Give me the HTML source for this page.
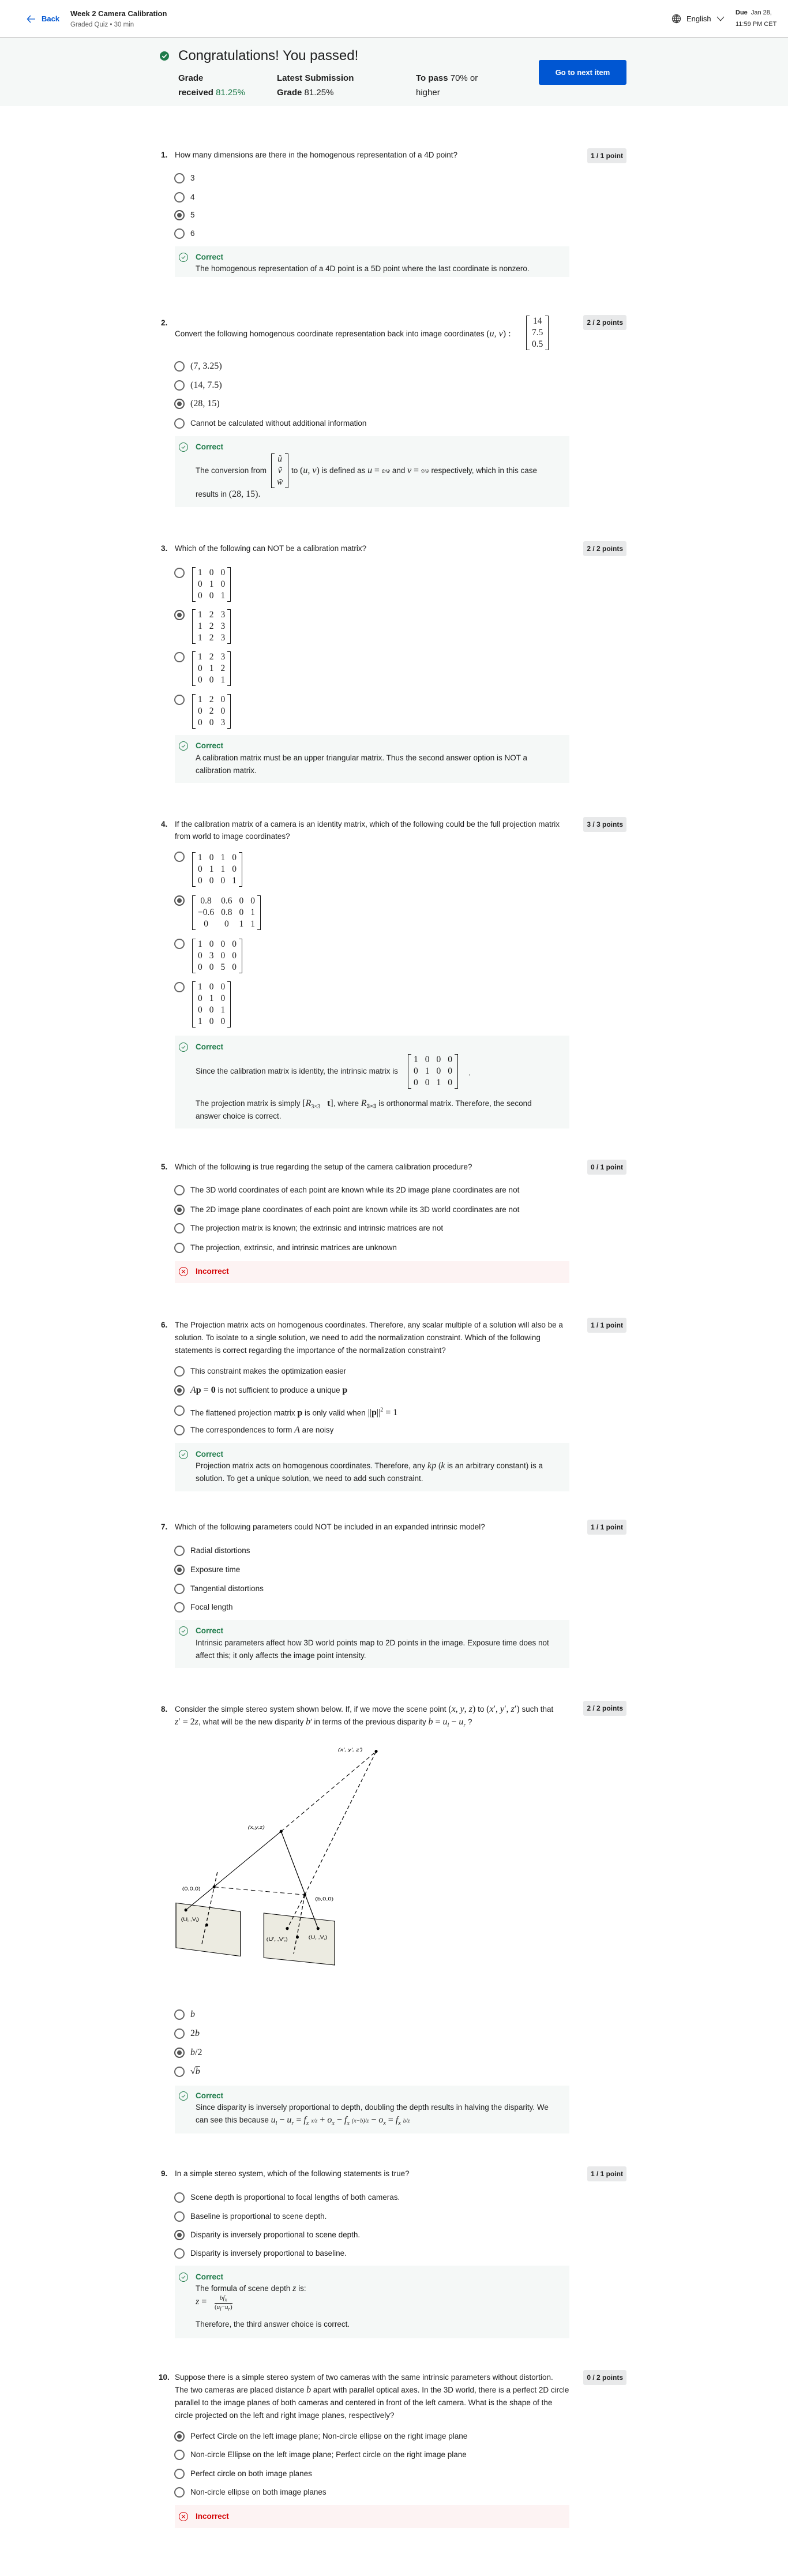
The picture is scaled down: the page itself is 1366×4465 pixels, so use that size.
<!DOCTYPE html>
<html><head><meta charset="utf-8">
<style>
*{margin:0;padding:0;box-sizing:border-box}
body{width:1366px;height:4465px;position:relative;background:#fff;font-family:"Liberation Sans",sans-serif;color:#1f1f1f;font-size:13.5px;overflow:hidden}
.a{position:absolute;white-space:nowrap;line-height:20px}
.q{position:absolute;left:303px;white-space:nowrap;line-height:21px;font-size:13.5px}
.n{position:absolute;left:279px;font-weight:bold;line-height:21px}
.rd{position:absolute;left:302px;width:18px;height:18px;margin-top:-9px;border:2px solid #666;border-radius:50%}
.rd.on{background:#555;box-shadow:inset 0 0 0 3px #fff;border-color:#555}
.o{position:absolute;left:330px;white-space:nowrap;line-height:20px;margin-top:-10px}
.fb{position:absolute;left:303px;width:684px;background:#f5f8f7}
.fb.bad{background:#fdf3f3}
.ok{position:absolute;left:339px;color:#1e7b4a;font-weight:bold;line-height:20px;margin-top:-10px}
.bd{position:absolute;left:339px;color:#d30001;font-weight:bold;line-height:20px;margin-top:-10px}
.ic{position:absolute;left:310px;width:16px;height:16px;margin-top:-8px;border:1.3px solid #1e7b4a;border-radius:50%}
.ic svg{position:absolute;left:3px;top:3px}
.ic.x{border-color:#d30001}
.ft{position:absolute;left:339px;white-space:nowrap;line-height:20px;margin-top:-10px}
.pt{position:absolute;right:280px;height:26px;line-height:26px;padding:0 6px;background:#e8e9ea;border-radius:3px;font-weight:bold;font-size:12px}
.m{font-family:"Liberation Serif",serif;font-style:italic;font-size:16px}
.mr{font-family:"Liberation Serif",serif;font-size:16px}
.mx{position:absolute;display:inline-block;font-family:"Liberation Serif",serif;font-size:15.5px;padding:0 4px}
.mx:before,.mx:after{content:"";position:absolute;top:0;bottom:0;width:5px;border:1.4px solid #111}
.mx:before{left:0;border-right:none}
.mx:after{right:0;border-left:none}
.mx table{border-collapse:collapse}
.mx td{height:20px;line-height:20px;text-align:center;padding:0 6px}
</style></head><body>

<!-- header -->
<svg class="a" style="left:46px;top:25px" width="16" height="16" viewBox="0 0 16 16"><path d="M7 2 L1.5 8 L7 14 M1.5 8 H15" stroke="#0056d2" stroke-width="1.3" fill="none"/></svg>
<div class="a" style="left:72px;top:23px;color:#0056d2;font-weight:bold;font-size:13px">Back</div>
<div class="a" style="left:122px;top:14px;font-weight:bold;font-size:13px">Week 2 Camera Calibration</div>
<div class="a" style="left:122px;top:33px;color:#636363;font-size:11.5px">Graded Quiz • 30 min</div>
<svg class="a" style="left:1164px;top:24px" width="17" height="17" viewBox="0 0 18 18"><g fill="none" stroke="#333" stroke-width="1.1"><circle cx="9" cy="9" r="7.5"/><ellipse cx="9" cy="9" rx="3.3" ry="7.5"/><path d="M1.5 9H16.5M2.5 5.5H15.5M2.5 12.5H15.5M9 1.5V16.5"/></g></svg>
<div class="a" style="left:1190px;top:23px;font-size:13px">English</div>
<svg class="a" style="left:1242px;top:28px" width="14" height="10" viewBox="0 0 14 10"><path d="M1 1 L7 8 L13 1" stroke="#333" stroke-width="1.2" fill="none"/></svg>
<div class="a" style="left:1275px;top:12px;font-size:11px"><b>Due</b>&nbsp; Jan 28,</div>
<div class="a" style="left:1275px;top:32px;font-size:11px">11:59 PM CET</div>
<div style="position:absolute;left:0;top:64px;width:1366px;height:2px;background:#d6d6d6"></div>
<div style="position:absolute;left:0;top:66px;width:1366px;height:118px;background:#f5f8f7"></div>
<svg class="a" style="left:277px;top:89px" width="16" height="16" viewBox="0 0 16 16"><circle cx="8" cy="8" r="8" fill="#1e7b4a"/><path d="M4.3 8.2 L7 10.8 L11.8 5.5" stroke="#fff" stroke-width="1.8" fill="none"/></svg>
<div class="a" style="left:309px;top:82px;font-size:24px;line-height:30px">Congratulations! You passed!</div>
<div class="a" style="left:309px;top:123px;font-size:15px;line-height:25px"><b>Grade</b><br><b>received</b> <span style="color:#1e7b4a">81.25%</span></div>
<div class="a" style="left:480px;top:123px;font-size:15px;line-height:25px"><b>Latest Submission</b><br><b>Grade</b> 81.25%</div>
<div class="a" style="left:721px;top:123px;font-size:15px;line-height:25px"><b>To pass</b> 70% or<br>higher</div>
<div style="position:absolute;left:934px;top:104px;width:152px;height:43px;background:#0056d2;border-radius:3px;color:#fff;font-weight:bold;font-size:13px;text-align:center;line-height:43px">Go to next item</div>

<!-- Q1 -->
<div class="n" style="top:258px">1.</div><div class="q" style="top:258px">How many dimensions are there in the homogenous representation of a 4D point?</div>
<div class="pt" style="top:257px">1 / 1 point</div>
<i class="rd" style="top:309px"></i><div class="o" style="top:309px">3</div>
<i class="rd" style="top:342px"></i><div class="o" style="top:342px">4</div>
<i class="rd on" style="top:373px"></i><div class="o" style="top:373px">5</div>
<i class="rd" style="top:405px"></i><div class="o" style="top:405px">6</div>
<div class="fb" style="top:427px;height:53px"></div>
<div class="ic" style="top:446px"><svg width="8" height="8" viewBox="0 0 8 8"><path d="M1 4 L3.2 6.2 L7 1.8" stroke="#1e7b4a" stroke-width="1" fill="none"/></svg></div><div class="ok" style="top:446px">Correct</div>
<div class="ft" style="top:466px">The homogenous representation of a 4D point is a 5D point where the last coordinate is nonzero.</div>

<!-- Q2 -->
<div class="n" style="top:549px">2.</div>
<div class="q" style="top:568px">Convert the following homogenous coordinate representation back into image coordinates <span class="mr">(<i>u</i>, <i>v</i>) :</span></div>
<div class="mx" style="left:912px;top:547px"><table><tr><td>14</td></tr><tr><td>7.5</td></tr><tr><td>0.5</td></tr></table></div>
<div class="pt" style="top:546px">2 / 2 points</div>
<i class="rd" style="top:635px"></i><div class="o mr" style="top:635px">(7, 3.25)</div>
<i class="rd" style="top:668px"></i><div class="o mr" style="top:668px">(14, 7.5)</div>
<i class="rd on" style="top:700px"></i><div class="o mr" style="top:700px">(28, 15)</div>
<i class="rd" style="top:734px"></i><div class="o" style="top:734px">Cannot be calculated without additional information</div>
<div class="fb" style="top:756px;height:123px"></div>
<div class="ic" style="top:775px"><svg width="8" height="8" viewBox="0 0 8 8"><path d="M1 4 L3.2 6.2 L7 1.8" stroke="#1e7b4a" stroke-width="1" fill="none"/></svg></div><div class="ok" style="top:775px">Correct</div>
<div class="ft" style="top:816px">The conversion from</div>
<div class="mx m" style="left:470px;top:786px"><table><tr><td>ũ</td></tr><tr><td>ṽ</td></tr><tr><td>w̃</td></tr></table></div>
<div class="ft" style="top:816px;left:505px">to <span class="mr">(<i>u</i>, <i>v</i>)</span> is defined as <span class="m">u</span> <span class="mr">=</span> <span class="m" style="font-size:10px">ũ/w̃</span> and <span class="m">v</span> <span class="mr">=</span> <span class="m" style="font-size:10px">ṽ/w̃</span> respectively, which in this case</div>
<div class="ft" style="top:857px">results in <span class="mr">(28, 15).</span></div>

<!-- Q3 -->
<div class="n" style="top:940px">3.</div><div class="q" style="top:940px">Which of the following can NOT be a calibration matrix?</div>
<div class="pt" style="top:938px">2 / 2 points</div>
<i class="rd" style="top:993px"></i><div class="mx" style="left:333px;top:983px"><table><tr><td>1</td><td>0</td><td>0</td></tr><tr><td>0</td><td>1</td><td>0</td></tr><tr><td>0</td><td>0</td><td>1</td></tr></table></div>
<i class="rd on" style="top:1066px"></i><div class="mx" style="left:333px;top:1056px"><table><tr><td>1</td><td>2</td><td>3</td></tr><tr><td>1</td><td>2</td><td>3</td></tr><tr><td>1</td><td>2</td><td>3</td></tr></table></div>
<i class="rd" style="top:1139px"></i><div class="mx" style="left:333px;top:1129px"><table><tr><td>1</td><td>2</td><td>3</td></tr><tr><td>0</td><td>1</td><td>2</td></tr><tr><td>0</td><td>0</td><td>1</td></tr></table></div>
<i class="rd" style="top:1213px"></i><div class="mx" style="left:333px;top:1203px"><table><tr><td>1</td><td>2</td><td>0</td></tr><tr><td>0</td><td>2</td><td>0</td></tr><tr><td>0</td><td>0</td><td>3</td></tr></table></div>
<div class="fb" style="top:1274px;height:83px"></div>
<div class="ic" style="top:1293px"><svg width="8" height="8" viewBox="0 0 8 8"><path d="M1 4 L3.2 6.2 L7 1.8" stroke="#1e7b4a" stroke-width="1" fill="none"/></svg></div><div class="ok" style="top:1293px">Correct</div>
<div class="ft" style="top:1314px">A calibration matrix must be an upper triangular matrix. Thus the second answer option is NOT a</div>
<div class="ft" style="top:1336px">calibration matrix.</div>

<!-- Q4 -->
<div class="n" style="top:1418px">4.</div><div class="q" style="top:1418px">If the calibration matrix of a camera is an identity matrix, which of the following could be the full projection matrix<br>from world to image coordinates?</div>
<div class="pt" style="top:1416px">3 / 3 points</div>
<i class="rd" style="top:1485px"></i><div class="mx" style="left:333px;top:1477px"><table><tr><td>1</td><td>0</td><td>1</td><td>0</td></tr><tr><td>0</td><td>1</td><td>1</td><td>0</td></tr><tr><td>0</td><td>0</td><td>0</td><td>1</td></tr></table></div>
<i class="rd on" style="top:1561px"></i><div class="mx" style="left:333px;top:1552px"><table><tr><td>0.8</td><td>0.6</td><td>0</td><td>0</td></tr><tr><td>−0.6</td><td>0.8</td><td>0</td><td>1</td></tr><tr><td>0</td><td>0</td><td>1</td><td>1</td></tr></table></div>
<i class="rd" style="top:1636px"></i><div class="mx" style="left:333px;top:1627px"><table><tr><td>1</td><td>0</td><td>0</td><td>0</td></tr><tr><td>0</td><td>3</td><td>0</td><td>0</td></tr><tr><td>0</td><td>0</td><td>5</td><td>0</td></tr></table></div>
<i class="rd" style="top:1711px"></i><div class="mx" style="left:333px;top:1701px"><table><tr><td>1</td><td>0</td><td>0</td></tr><tr><td>0</td><td>1</td><td>0</td></tr><tr><td>0</td><td>0</td><td>1</td></tr><tr><td>1</td><td>0</td><td>0</td></tr></table></div>
<div class="fb" style="top:1795px;height:161px"></div>
<div class="ic" style="top:1815px"><svg width="8" height="8" viewBox="0 0 8 8"><path d="M1 4 L3.2 6.2 L7 1.8" stroke="#1e7b4a" stroke-width="1" fill="none"/></svg></div><div class="ok" style="top:1815px">Correct</div>
<div class="ft" style="top:1857px">Since the calibration matrix is identity, the intrinsic matrix is</div>
<div class="mx" style="left:707px;top:1827px"><table><tr><td>1</td><td>0</td><td>0</td><td>0</td></tr><tr><td>0</td><td>1</td><td>0</td><td>0</td></tr><tr><td>0</td><td>0</td><td>1</td><td>0</td></tr></table></div>
<div class="ft" style="top:1860px;left:812px">.</div>
<div class="ft" style="top:1913px">The projection matrix is simply <span class="mr">[<i>R</i><sub style="font-size:10px">3×3</sub> &nbsp; <b>t</b>]</span>, where <span class="m">R</span><sub style="font-size:10px">3×3</sub> is orthonormal matrix. Therefore, the second</div>
<div class="ft" style="top:1935px">answer choice is correct.</div>

<!-- Q5 -->
<div class="n" style="top:2012px">5.</div><div class="q" style="top:2012px">Which of the following is true regarding the setup of the camera calibration procedure?</div>
<div class="pt" style="top:2010px">0 / 1 point</div>
<i class="rd" style="top:2063px"></i><div class="o" style="top:2063px">The 3D world coordinates of each point are known while its 2D image plane coordinates are not</div>
<i class="rd on" style="top:2097px"></i><div class="o" style="top:2097px">The 2D image plane coordinates of each point are known while its 3D world coordinates are not</div>
<i class="rd" style="top:2129px"></i><div class="o" style="top:2129px">The projection matrix is known; the extrinsic and intrinsic matrices are not</div>
<i class="rd" style="top:2163px"></i><div class="o" style="top:2163px">The projection, extrinsic, and intrinsic matrices are unknown</div>
<div class="fb bad" style="top:2186px;height:38px"></div>
<div class="ic x" style="top:2204px"><svg width="8" height="8" viewBox="0 0 8 8"><path d="M1 1 L7 7 M7 1 L1 7" stroke="#d30001" stroke-width="1" fill="none"/></svg></div><div class="bd" style="top:2204px">Incorrect</div>

<!-- Q6 -->
<div class="n" style="top:2286px">6.</div><div class="q" style="top:2286px;line-height:22px">The Projection matrix acts on homogenous coordinates. Therefore, any scalar multiple of a solution will also be a<br>solution. To isolate to a single solution, we need to add the normalization constraint. Which of the following<br>statements is correct regarding the importance of the normalization constraint?</div>
<div class="pt" style="top:2284px">1 / 1 point</div>
<i class="rd" style="top:2377px"></i><div class="o" style="top:2377px">This constraint makes the optimization easier</div>
<i class="rd on" style="top:2410px"></i><div class="o" style="top:2410px"><span class="mr"><i>A</i><b>p</b> = <b>0</b></span> is not sufficient to produce a unique <b class="mr">p</b></div>
<i class="rd" style="top:2445px"></i><div class="o" style="top:2445px">The flattened projection matrix <b class="mr">p</b> is only valid when <span class="mr">||<b>p</b>||<sup style="font-size:10px">2</sup> = 1</span></div>
<i class="rd" style="top:2479px"></i><div class="o" style="top:2479px">The correspondences to form <span class="m">A</span> are noisy</div>
<div class="fb" style="top:2501px;height:84px"></div>
<div class="ic" style="top:2521px"><svg width="8" height="8" viewBox="0 0 8 8"><path d="M1 4 L3.2 6.2 L7 1.8" stroke="#1e7b4a" stroke-width="1" fill="none"/></svg></div><div class="ok" style="top:2521px">Correct</div>
<div class="ft" style="top:2541px">Projection matrix acts on homogenous coordinates. Therefore, any <span class="m">kp</span> (<span class="m">k</span> is an arbitrary constant) is a</div>
<div class="ft" style="top:2563px">solution. To get a unique solution, we need to add such constraint.</div>

<!-- Q7 -->
<div class="n" style="top:2636px">7.</div><div class="q" style="top:2636px">Which of the following parameters could NOT be included in an expanded intrinsic model?</div>
<div class="pt" style="top:2634px">1 / 1 point</div>
<i class="rd" style="top:2688px"></i><div class="o" style="top:2688px">Radial distortions</div>
<i class="rd on" style="top:2721px"></i><div class="o" style="top:2721px">Exposure time</div>
<i class="rd" style="top:2754px"></i><div class="o" style="top:2754px">Tangential distortions</div>
<i class="rd" style="top:2786px"></i><div class="o" style="top:2786px">Focal length</div>
<div class="fb" style="top:2808px;height:83px"></div>
<div class="ic" style="top:2827px"><svg width="8" height="8" viewBox="0 0 8 8"><path d="M1 4 L3.2 6.2 L7 1.8" stroke="#1e7b4a" stroke-width="1" fill="none"/></svg></div><div class="ok" style="top:2827px">Correct</div>
<div class="ft" style="top:2848px">Intrinsic parameters affect how 3D world points map to 2D points in the image. Exposure time does not</div>
<div class="ft" style="top:2870px">affect this; it only affects the image point intensity.</div>

<!-- Q8 -->
<div class="n" style="top:2952px">8.</div><div class="q" style="top:2952px;line-height:22px">Consider the simple stereo system shown below. If, if we move the scene point <span class="mr">(<i>x</i>, <i>y</i>, <i>z</i>)</span> to <span class="mr">(<i>x</i>′, <i>y</i>′, <i>z</i>′)</span> such that<br><span class="mr"><i>z</i>′ = 2<i>z</i></span>, what will be the new disparity <span class="m">b</span>′ in terms of the previous disparity <span class="mr"><i>b</i> = <i>u<sub style="font-size:10px">l</sub></i> − <i>u<sub style="font-size:10px">r</sub></i></span> ?</div>
<div class="pt" style="top:2948px">2 / 2 points</div>
<svg style="position:absolute;left:177px;top:3000px" width="589" height="420" viewBox="0 0 1380 1260" preserveAspectRatio="none">
<g stroke="#000" stroke-width="3" fill="none">
<path d="M300 895 L562 940 L562 1172 L300 1128 Z" fill="#ecebe1"/>
<path d="M657 948 L945 990 L945 1218 L657 1180 Z" fill="#ecebe1"/>
<path d="M340 932 L727 523 L877 1028"/>
<g stroke-dasharray="18 12"><path d="M727 523 L1113 107 L823 853"/><path d="M455 812 L823 853"/><path d="M468 735 L405 1110"/><path d="M823 853 L752 1028"/><path d="M823 853 L778 1160"/></g>
</g>
<g fill="#000"><ellipse cx="1113" cy="107" rx="6" ry="8"/><ellipse cx="727" cy="523" rx="6" ry="8"/><ellipse cx="455" cy="812" rx="6" ry="8"/><ellipse cx="823" cy="853" rx="6" ry="8"/><ellipse cx="340" cy="932" rx="6" ry="8"/><ellipse cx="425" cy="1010" rx="6" ry="8"/><ellipse cx="752" cy="1028" rx="6" ry="8"/><ellipse cx="793" cy="1073" rx="6" ry="8"/><ellipse cx="877" cy="1028" rx="6" ry="8"/></g>
<g font-family="Liberation Sans,sans-serif" font-size="26" fill="#000">
<text x="958" y="106" font-style="italic">(x', y', z')</text>
<text x="592" y="510" font-style="italic">(x,y,z)</text>
<text x="325" y="830">(0,0,0)</text>
<text x="865" y="882">(b,0,0)</text>
<text x="320" y="988">(U<tspan font-size="14" dy="5">l</tspan><tspan dy="-5"> ,V</tspan><tspan font-size="14" dy="5">l</tspan><tspan dy="-5">)</tspan></text>
<text x="667" y="1092">(U'<tspan font-size="14" dy="5">r</tspan><tspan dy="-5"> ,V'</tspan><tspan font-size="14" dy="5">r</tspan><tspan dy="-5">)</tspan></text>
<text x="838" y="1082">(U<tspan font-size="14" dy="5">r</tspan><tspan dy="-5"> ,V</tspan><tspan font-size="14" dy="5">r</tspan><tspan dy="-5">)</tspan></text>
</g></svg>
<i class="rd" style="top:3492px"></i><div class="o m" style="top:3492px">b</div>
<i class="rd" style="top:3525px"></i><div class="o mr" style="top:3525px">2<i>b</i></div>
<i class="rd on" style="top:3558px"></i><div class="o mr" style="top:3558px"><i>b</i>/2</div>
<i class="rd" style="top:3591px"></i><div class="o mr" style="top:3591px">√<span style="text-decoration:overline"><i>b</i></span></div>
<div class="fb" style="top:3615px;height:83px"></div>
<div class="ic" style="top:3633px"><svg width="8" height="8" viewBox="0 0 8 8"><path d="M1 4 L3.2 6.2 L7 1.8" stroke="#1e7b4a" stroke-width="1" fill="none"/></svg></div><div class="ok" style="top:3633px">Correct</div>
<div class="ft" style="top:3653px">Since disparity is inversely proportional to depth, doubling the depth results in halving the disparity. We</div>
<div class="ft" style="top:3675px">can see this because <span class="mr"><i>u<sub style="font-size:10px">l</sub></i> − <i>u<sub style="font-size:10px">r</sub></i> = <i>f<sub style="font-size:10px">x</sub></i> <i style="font-size:10px">x/z</i> + <i>o<sub style="font-size:10px">x</sub></i> − <i>f<sub style="font-size:10px">x</sub></i> <i style="font-size:10px">(x−b)/z</i> − <i>o<sub style="font-size:10px">x</sub></i> = <i>f<sub style="font-size:10px">x</sub></i> <i style="font-size:10px">b/z</i></span></div>

<!-- Q9 -->
<div class="n" style="top:3757px">9.</div><div class="q" style="top:3757px">In a simple stereo system, which of the following statements is true?</div>
<div class="pt" style="top:3755px">1 / 1 point</div>
<i class="rd" style="top:3809px"></i><div class="o" style="top:3809px">Scene depth is proportional to focal lengths of both cameras.</div>
<i class="rd" style="top:3842px"></i><div class="o" style="top:3842px">Baseline is proportional to scene depth.</div>
<i class="rd on" style="top:3874px"></i><div class="o" style="top:3874px">Disparity is inversely proportional to scene depth.</div>
<i class="rd" style="top:3906px"></i><div class="o" style="top:3906px">Disparity is inversely proportional to baseline.</div>
<div class="fb" style="top:3927px;height:126px"></div>
<div class="ic" style="top:3947px"><svg width="8" height="8" viewBox="0 0 8 8"><path d="M1 4 L3.2 6.2 L7 1.8" stroke="#1e7b4a" stroke-width="1" fill="none"/></svg></div><div class="ok" style="top:3947px">Correct</div>
<div class="ft" style="top:3967px">The formula of scene depth <span class="m">z</span> is:</div>
<div class="ft mr" style="top:3990px"><i>z</i> = </div>
<div class="a mr" style="left:372px;top:3977px;font-size:11px;line-height:12px;text-align:center"><i>bf<sub>x</sub></i><div style="border-top:1px solid #333">(<i>u<sub>l</sub></i>−<i>u<sub>r</sub></i>)</div></div>
<div class="ft" style="top:4029px">Therefore, the third answer choice is correct.</div>

<!-- Q10 -->
<div class="n" style="top:4110px;left:275px">10.</div><div class="q" style="top:4110px;line-height:22px">Suppose there is a simple stereo system of two cameras with the same intrinsic parameters without distortion.<br>The two cameras are placed distance <span class="m">b</span> apart with parallel optical axes. In the 3D world, there is a perfect 2D circle<br>parallel to the image planes of both cameras and centered in front of the left camera. What is the shape of the<br>circle projected on the left and right image planes, respectively?</div>
<div class="pt" style="top:4108px">0 / 2 points</div>
<i class="rd on" style="top:4223px"></i><div class="o" style="top:4223px">Perfect Circle on the left image plane; Non-circle ellipse on the right image plane</div>
<i class="rd" style="top:4255px"></i><div class="o" style="top:4255px">Non-circle Ellipse on the left image plane; Perfect circle on the right image plane</div>
<i class="rd" style="top:4288px"></i><div class="o" style="top:4288px">Perfect circle on both image planes</div>
<i class="rd" style="top:4320px"></i><div class="o" style="top:4320px">Non-circle ellipse on both image planes</div>
<div class="fb bad" style="top:4342px;height:40px"></div>
<div class="ic x" style="top:4362px"><svg width="8" height="8" viewBox="0 0 8 8"><path d="M1 1 L7 7 M7 1 L1 7" stroke="#d30001" stroke-width="1" fill="none"/></svg></div><div class="bd" style="top:4362px">Incorrect</div>

</body></html>
